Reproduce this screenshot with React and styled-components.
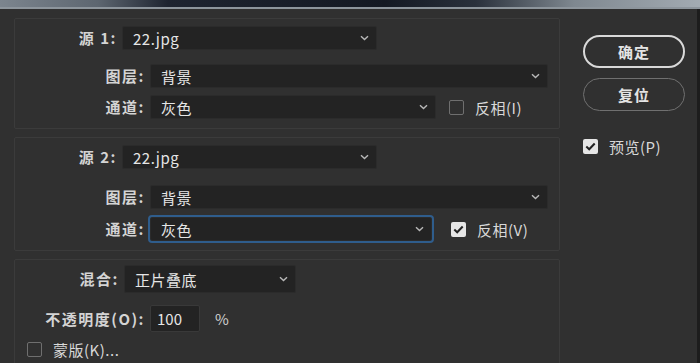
import styled, { createGlobalStyle, css } from 'styled-components';

const GlobalStyle = createGlobalStyle`
  html, body {
    margin: 0;
    padding: 0;
    background: #303030;
  }
  body {
    font-family: 'Noto Sans CJK SC', 'Noto Sans', sans-serif;
    color: #dcdcdc;
  }
`;

const Screen = styled.div`
  width: 700px;
  height: 363px;
  overflow: hidden;
  display: flex;
  flex-direction: column;
`;

const Desktop = styled.div`
  height: 7px;
  flex-shrink: 0;
  background: linear-gradient(
    90deg,
    #7c858e 0%,
    #5d6670 14%,
    #1e2430 24%,
    #141923 55%,
    #2a313c 68%,
    #7f8890 82%,
    #a3abb2 100%
  );
`;

const Edge = styled.div`
  height: 2px;
  flex-shrink: 0;
  background: #8d959c;
`;

const Dialog = styled.div`
  flex: 1;
  display: flex;
  align-items: flex-start;
  gap: 23px;
  padding: 9px 0 0 14px;
  background: #303030;
  border-right: 3px solid #1d1d1d;
`;

const Main = styled.div`
  width: 546px;
  height: 380px;
  display: flex;
  flex-direction: column;
  gap: 8px;
`;

const Group = styled.div`
  border: 1px solid #3b3b3b;
  border-radius: 2px;
  padding: ${(p) => p.$pad || '7px 0 9px 0'};
  display: flex;
  flex-direction: column;
  gap: 7px;
  flex: ${(p) => (p.$grow ? 1 : 'none')};
`;

const Row = styled.div`
  display: flex;
  align-items: center;
  gap: 5px;
  margin-top: ${(p) => p.$mt || 0}px;
`;

const Label = styled.span`
  width: ${(p) => p.$w}px;
  text-align: right;
  font-size: 15px;
  font-weight: bold;
  letter-spacing: 1.5px;
  line-height: 20px;
  color: #d4d4d4;
  white-space: nowrap;
`;

const Select = styled.div`
  width: ${(p) => p.$w}px;
  height: ${(p) => p.$h || 24}px;
  box-sizing: border-box;
  background: #232323;
  border: 1px solid #2b2b2b;
  border-radius: 2px;
  display: flex;
  align-items: center;
  justify-content: space-between;
  padding: 0 7px 0 10px;
  font-size: 15px;
  letter-spacing: 0.5px;
  color: #e6e6e6;
  ${(p) =>
    p.$focus &&
    css`
      outline: 2px solid #2f5d8c;
      outline-offset: 0;
    `}
`;

const Input = styled.div`
  width: 50px;
  height: 27px;
  box-sizing: border-box;
  background: #232323;
  border: 1px solid #393939;
  border-radius: 2px;
  display: flex;
  align-items: center;
  padding-left: 6px;
  font-size: 15px;
  color: #e6e6e6;
`;

const Unit = styled.span`
  margin-left: 10px;
  font-size: 15px;
  color: #cfcfcf;
`;

const Check = styled.label`
  display: flex;
  align-items: center;
  gap: 11px;
  margin-left: ${(p) => p.$ml || 0}px;
  font-size: 15px;
  letter-spacing: 0.5px;
  color: #d8d8d8;
  white-space: nowrap;
`;

const Box = styled.span`
  width: 15px;
  height: 15px;
  box-sizing: border-box;
  border-radius: 2px;
  display: flex;
  align-items: center;
  justify-content: center;
  ${(p) =>
    p.$on
      ? css`
          background: #e6e6e6;
        `
      : css`
          border: 1.5px solid #6f6f6f;
        `}
`;

const Side = styled.div`
  display: flex;
  flex-direction: column;
  padding-top: 17px;
`;

const Button = styled.div`
  width: 102px;
  height: 33px;
  box-sizing: border-box;
  border-radius: 17px;
  border: ${(p) => (p.$primary ? '2px solid #d9d9d9' : '1.5px solid #707070')};
  display: flex;
  align-items: center;
  justify-content: center;
  font-size: 15px;
  font-weight: bold;
  letter-spacing: 1px;
  color: #e4e4e4;
  margin-bottom: ${(p) => p.$mb || 10}px;
`;

const Chevron = () => (
  <svg width="9" height="6" viewBox="0 0 9 6">
    <path d="M1 1.2 L4.5 4.6 L8 1.2" fill="none" stroke="#b8b8b8" strokeWidth="1.4" />
  </svg>
);

const Tick = () => (
  <svg width="11" height="9" viewBox="0 0 11 9">
    <path d="M1.3 4.6 L4.2 7.3 L9.7 1.5" fill="none" stroke="#222" strokeWidth="2" />
  </svg>
);

const Dropdown = ({ w, h, focus, children }) => (
  <Select $w={w} $h={h} $focus={focus}>
    <span>{children}</span>
    <Chevron />
  </Select>
);

const CheckItem = ({ on, ml, children }) => (
  <Check $ml={ml}>
    <Box $on={on}>{on && <Tick />}</Box>
    {children}
  </Check>
);

const SourceGroup = ({ index, invert, hotkey, focus, rowGap }) => (
  <Group>
    <Row>
      <Label $w={102}>源 {index}:</Label>
      <Dropdown w={255}>22.jpg</Dropdown>
    </Row>
    <Row $mt={rowGap}>
      <Label $w={130}>图层:</Label>
      <Dropdown w={398}>背景</Dropdown>
    </Row>
    <Row $mt={focus ? 1 : 0}>
      <Label $w={130}>通道:</Label>
      <Dropdown w={focus ? 282 : 286} focus={focus}>
        灰色
      </Dropdown>
      <CheckItem on={invert} ml={focus ? 14 : 8}>
        反相({hotkey})
      </CheckItem>
    </Row>
  </Group>
);

export default function App() {
  return (
    <Screen>
      <GlobalStyle />
      <Desktop />
      <Edge />
      <Dialog>
        <Main>
          <SourceGroup index={1} hotkey="I" rowGap={7} />
          <SourceGroup index={2} hotkey="V" invert focus rowGap={9} />
          <Group $grow $pad="5px 0 0 12px">
            <Row>
              <Label $w={92}>混合:</Label>
              <Dropdown w={172} h={28}>
                正片叠底
              </Dropdown>
            </Row>
            <Row $mt={5}>
              <Label $w={118}>不透明度(O):</Label>
              <Input>100</Input>
              <Unit>%</Unit>
            </Row>
            <Row $mt={0}>
              <CheckItem>蒙版(K)...</CheckItem>
            </Row>
          </Group>
        </Main>
        <Side>
          <Button $primary>确定</Button>
          <Button $mb={25}>复位</Button>
          <CheckItem on>预览(P)</CheckItem>
        </Side>
      </Dialog>
    </Screen>
  );
}
